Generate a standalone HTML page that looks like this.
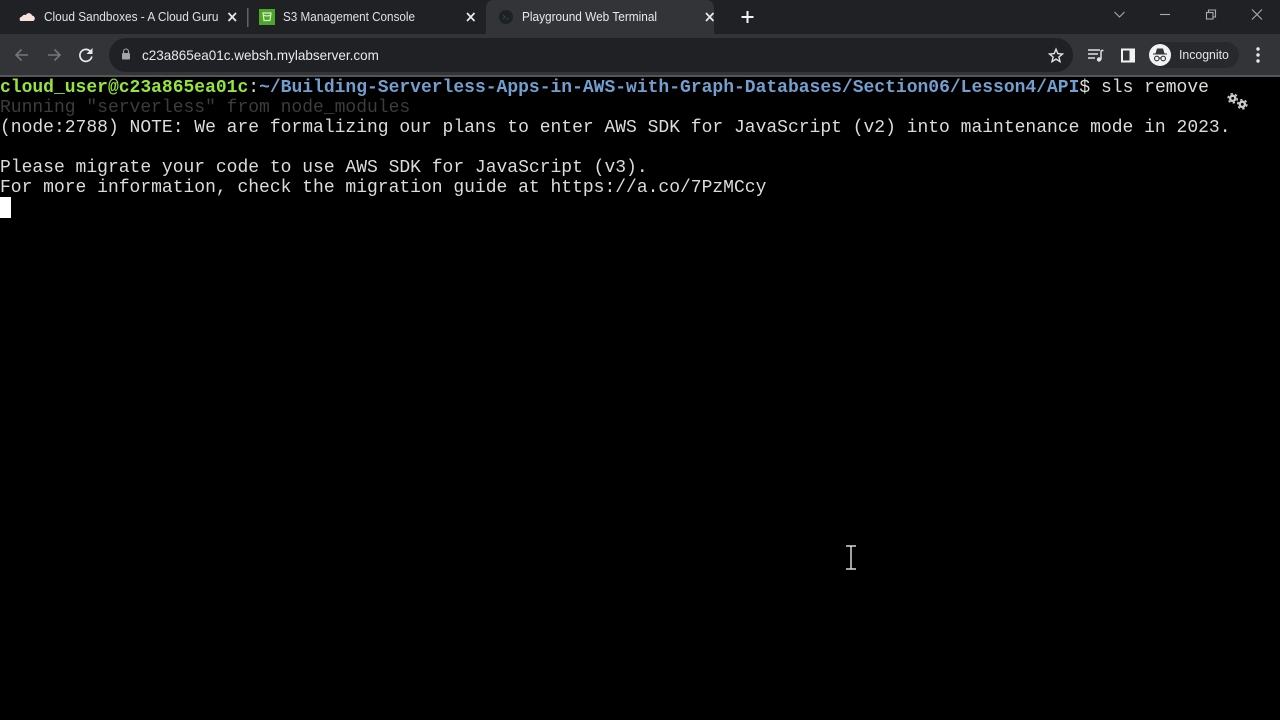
<!DOCTYPE html>
<html><head><meta charset="utf-8"><style>
html,body{margin:0;padding:0;background:#000;width:1280px;height:720px;overflow:hidden}
.abs{position:absolute}
#tabbar{left:0;top:0;width:1280px;height:34px;background:#202124}
#toolbar{left:0;top:37px;width:1280px;height:38px;background:#333437}
#band{left:0;top:34px;width:1280px;height:3px;background:#333437}
#sep{left:0;top:75px;width:1280px;height:2px;background:#55565a}
#omni{left:109px;top:38px;width:964px;height:34px;border-radius:17px;background:#202124}
.t{position:absolute;font:13px "Liberation Sans",sans-serif;color:#dee1e6;white-space:nowrap;line-height:16px;transform-origin:0 50%;filter:blur(.25px)}
#term{left:0;top:78px;font:18px/20px "Liberation Mono",monospace;color:#dcdcdc;white-space:pre;letter-spacing:-.008px;filter:blur(.3px)}
#term div{height:20px}
svg{position:absolute;overflow:visible}
</style></head><body>
<div class="abs" id="tabbar"></div>
<div class="abs" id="band"></div>
<div class="abs" id="toolbar"></div>
<div class="abs" id="sep"></div>
<div class="abs" id="omni"></div>

<!-- active tab -->
<svg style="left:0;top:0" width="1280" height="40">
<path d="M479 37c5 0 7-2 7-6V8c0-5 3-8 8-8h212c5 0 8 3 8 8v23c0 4 2 6 7 6z" fill="#333437"/>
<rect x="247" y="8" width="1.500" height="19" fill="#5f6368"/>
<!-- cloud favicon -->
<path d="M21 21c-2 0-2-4 1-4.500 1-2 3-2 4-1.500 1-2.500 5-2.500 6 .5 3 0 4 5 1 5.500z" fill="#f6e3de"/>
<!-- s3 favicon -->
<rect x="259" y="9" width="16" height="16" fill="#4fa52c"/>
<path d="M263 13h8l-1 7.500h-6z M263 15c2 1.200 6 1.200 8 0" fill="none" stroke="#d8f0c8" stroke-width="1.200"/>
<!-- terminal favicon -->
<circle cx="506" cy="17" r="7" fill="#1c2126"/>
<path d="M503 15l2 2-2 2M506 19h3" stroke="#3a4048" stroke-width="1" fill="none"/>
<!-- closes -->
<g stroke="#e8eaed" stroke-width="1.700" fill="none">
<path d="M228.500 13l7.500 8M236 13l-7.500 8"/>
<path d="M467 13l7.500 8M474.500 13l-7.500 8"/>
<path d="M706 13l7.500 8M713.500 13l-7.500 8"/>
</g>
<path d="M747.500 11v12M741.500 17h12" stroke="#f1f3f4" stroke-width="2" fill="none"/>
<!-- window controls -->
<g stroke="#a9abae" stroke-width="1.100" fill="none">
<path d="M1114.500 12l5 5 5-5"/>
<path d="M1160 14.500h10"/>
<rect x="1206.500" y="12.500" width="6.500" height="6.500"/>
<path d="M1208.500 12.500v-2.500h7v7h-2.500"/>
<path d="M1252 9.500l10 10M1262 9.500l-10 10"/>
</g>
</svg>

<div class="t" style="left:44px;top:9px;transform:scaleX(.911)">Cloud Sandboxes - A Cloud Guru</div>
<div class="t" style="left:283px;top:9px;transform:scaleX(.9)">S3 Management Console</div>
<div class="t" style="left:522px;top:9px;color:#e8eaed;transform:scaleX(.91)">Playground Web Terminal</div>

<svg style="left:0;top:36px" width="1280" height="40">
<!-- back -->
<g stroke="#74767a" stroke-width="1.600" fill="none">
<path d="M28 19H16M21.500 13.500L16 19l5.500 5.500"/>
<path d="M48 19h12M54.500 13.500L60 19l-5.500 5.500"/>
</g>
<!-- reload -->
<path d="M90.500 15.500a6 6 0 1 0 1.300 5" stroke="#e8eaed" stroke-width="1.700" fill="none"/>
<path d="M92.500 12v6h-6z" fill="#e8eaed"/>
<!-- lock -->
<rect x="122" y="17" width="8" height="6.500" rx="1" fill="#a2a4a8"/>
<path d="M123.500 17v-1.500a2.500 2.500 0 0 1 5 0V17" stroke="#a2a4a8" stroke-width="1.100" fill="none"/>
<!-- star -->
<path d="M1056 13.200l1.800 4.400 4.700.4-3.600 3 1.100 4.600-4-2.500-4 2.500 1.100-4.600-3.600-3 4.700-.4z" stroke="#dfe1e5" stroke-width="1.400" fill="none"/>
<!-- media -->
<g stroke="#dfe1e5" stroke-width="1.500" fill="none">
<path d="M1088 14h12M1088 18h10M1088 22h7"/>
<path d="M1101 14.500h2.500M1101 14.500v9"/>
</g>
<circle cx="1099" cy="23.500" r="2.200" fill="#dfe1e5"/>
<!-- side panel -->
<path fill-rule="evenodd" d="M1121 12.500h14v14h-14zM1123 14.500v10h6.500v-10z" fill="#f1f3f4"/>
<!-- incognito pill -->
<rect x="1149" y="6" width="90" height="26" rx="13" fill="#28292c"/>
<circle cx="1160" cy="19" r="11" fill="#f1f3f4"/>
<path d="M1153 17.500h14v1h-14zM1155.500 17.500l1.500-5h6l1.500 5z" fill="#35363a"/>
<g stroke="#35363a" stroke-width="1.100" fill="none"><circle cx="1156.800" cy="22.500" r="2.300"/><circle cx="1163.200" cy="22.500" r="2.300"/><path d="M1159 22h2"/></g>
<!-- menu -->
<g fill="#e8eaed"><circle cx="1258" cy="13" r="1.700"/><circle cx="1258" cy="19" r="1.700"/><circle cx="1258" cy="25" r="1.700"/></g>
</svg>

<div class="t" style="left:142px;top:47px;font-size:14px;color:#e8eaed;transform:scaleX(.963)">c23a865ea01c.websh.mylabserver.com</div>
<div class="t" style="left:1179px;top:47px;color:#e3e5e8;transform:scaleX(.945)">Incognito</div>

<div class="abs" id="term"><div><span style="color:#94e63e;font-weight:bold">cloud_user@c23a865ea01c</span>:<span style="color:#729fcf;font-weight:bold">~/Building-Serverless-Apps-in-AWS-with-Graph-Databases/Section06/Lesson4/API</span>$ sls remove</div><div style="color:#3c3c3c">Running "serverless" from node_modules</div><div>(node:2788) NOTE: We are formalizing our plans to enter AWS SDK for JavaScript (v2) into maintenance mode in 2023.</div><div> </div><div>Please migrate your code to use AWS SDK for JavaScript (v3).</div><div>For more information, check the migration guide at https://a.co/7PzMCcy</div></div>

<div class="abs" style="left:0;top:197px;width:11px;height:21px;background:#fff"></div>

<svg style="left:0;top:0" width="1280" height="720">
<!-- gears -->
<g fill="none" stroke="#cdcdcd">
<circle cx="1232.700" cy="98.300" r="2.600" stroke-width="2.300"/>
<circle cx="1232.700" cy="98.300" r="4.600" stroke-width="1.500" stroke-dasharray="2.400 2.420"/>
<circle cx="1242.300" cy="104.300" r="2.600" stroke-width="2.300"/>
<circle cx="1242.300" cy="104.300" r="4.600" stroke-width="1.500" stroke-dasharray="2.400 2.420"/>
</g>
<!-- I-beam cursor -->
<path d="M846 546h10M846 569h10M851 546v23" stroke="#d8d8d8" stroke-width="1.500" fill="none"/>
</svg>
</body></html>
